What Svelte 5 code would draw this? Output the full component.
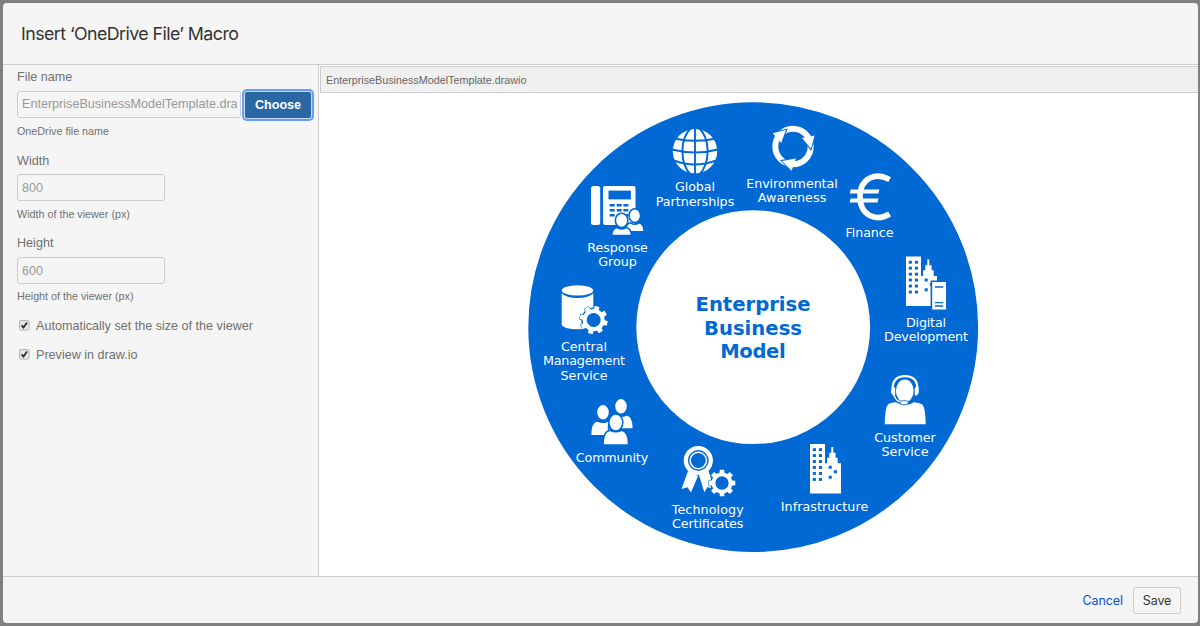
<script>
  const blue = '#0069d4';

  const labels = [
    { x: 695, y: 191.2, lines: [['Global', 40], ['Partnerships', 78.5]] },
    { x: 792, y: 187.6, lines: [['Environmental', 91.5], ['Awareness', 68.5]] },
    { x: 869.5, y: 237, lines: [['Finance', 48]] },
    { x: 926, y: 327, lines: [['Digital', 40], ['Development', 84]] },
    { x: 905, y: 441.8, lines: [['Customer', 61.5], ['Service', 47]] },
    { x: 824.5, y: 511, lines: [['Infrastructure', 87.5]] },
    { x: 707.7, y: 513.8, lines: [['Technology', 72], ['Certificates', 71.5]] },
    { x: 612, y: 462, lines: [['Community', 72.5]] },
    { x: 584, y: 351, lines: [['Central', 46], ['Management', 82], ['Service', 47]] },
    { x: 617.5, y: 251.8, lines: [['Response', 60.5], ['Group', 38.5]] }
  ];

  const title = [['Enterprise', 115, 311], ['Business', 98, 334.7], ['Model', 65.5, 358.4]];

  const gears = [
    { x: 593.7, y: 320, s: 1, turn: 14 },
    { x: 722, y: 483, s: 0.95, turn: 0 }
  ];
  const teeth = [0, 45, 90, 135, 180, 225, 270, 315];
  const windowRows = [448.2, 454.1, 460.1, 466, 472, 478];
</script>

{#snippet person(x, y, rx, ry, half, top, bottom)}
  <path
    d="M{x - half} {bottom}Q{x - half} {top + 1} {x - half * 0.45} {top}Q{x} {top + 3} {x + half * 0.45} {top}Q{x + half} {top + 1} {x + half} {bottom}Z"
    class="cut"
  />
  <ellipse cx={x} cy={y} {rx} {ry} class="cut" />
{/snippet}

{#snippet building()}
  <path d="M810 444H825V463.3H827V457.7H829.3V452.7H831.3V447H833.3V452.7H835.6V457.7H837.7V463.3H841V493.5H810Z" fill="#fff" />
  {#each windowRows as y}
    <rect x="812.8" {y} width="3.1" height="2.9" fill={blue} />
    <rect x="818.9" {y} width="3.1" height="2.9" fill={blue} />
  {/each}
  <path d="M828.7 465.8h3v3h-3zM833.9 470.3h3v3h-3zM828.7 475.7h3v3h-3z" fill={blue} />
{/snippet}

<div class="backdrop">
  <section class="dialog">
    <header><h1>Insert ‘OneDrive File’ Macro</h1></header>
    <main>
      <form class="side">
        <label class="name" for="file">File name</label>
        <div class="file-row">
          <div class="field wide" id="file"><span>EnterpriseBusinessModelTemplate.drawio</span></div>
          <button type="button" class="choose">Choose</button>
        </div>
        <p>OneDrive file name</p>
        <div class="name lower">Width</div>
        <div class="field">800</div>
        <p>Width of the viewer (px)</p>
        <div class="name">Height</div>
        <div class="field">600</div>
        <p class="last">Height of the viewer (px)</p>
        {#each ['Automatically set the size of the viewer', 'Preview in draw.io'] as option}
          <div class="check">
            <svg width="11" height="11" viewBox="0 0 11 11">
              <rect x=".5" y=".5" width="9.6" height="9.6" rx="1.5" fill="#e6e6e6" stroke="#b4b4b4" />
              <path d="M2.6 5.4L4.5 7.5L8 2.6" fill="none" stroke="#2d2d2d" stroke-width="1.8" />
            </svg>
            <span>{option}</span>
          </div>
        {/each}
      </form>
      <div class="preview">
        <div class="bar">EnterpriseBusinessModelTemplate.drawio</div>
        <svg class="diagram" viewBox="319 93 879 483">
          <circle cx="753.2" cy="327.2" r="170.9" fill="none" stroke={blue} stroke-width="108" />

          <!-- globe -->
          <circle cx="695" cy="151.3" r="22.2" fill="#fff" />
          <g fill="none" stroke={blue} stroke-width="1.9">
            <path d="M695 128V175M691 128C679.5 139 679.5 163 691 175M699 128C710.5 139 710.5 163 699 175M674 138.5Q695 143 716 138.5M672 149.5Q695 155.5 718 149.5M674 160.5Q695 168.5 716 160.5" />
          </g>

          <!-- cycle arrows -->
          <circle cx="793" cy="146.5" r="17.7" fill="none" stroke="#fff" stroke-width="6" />
          {#each [0, 120, 240] as turn}
            <g transform="rotate({turn} 793 146.5)">
              <path d="M801.8 138.8L811.2 151L815.5 136.5Z" fill={blue} />
              <path d="M802 138L811 148.8L814.6 135.6Z" fill="#fff" />
            </g>
          {/each}

          <!-- euro -->
          <path d="M889.6 179.6C875.5 171.8 860 178 860 196.6C860 215.5 876 222.2 889.6 214" fill="none" stroke="#fff" stroke-width="5.6" />
          <path d="M850.7 189.6H879.4L878.4 193.6H849.7ZM850.7 198.6H878.5L877.5 202.6H849.7Z" fill="#fff" />

          <!-- desk phone -->
          <rect x="591" y="186" width="9.2" height="39" rx="2.5" fill="#fff" />
          <rect x="603" y="186" width="32.5" height="39" rx="2" fill="#fff" />
          <rect x="608.5" y="190.6" width="22.4" height="8.8" fill={blue} />
          {#each [204, 209, 214] as y}
            <path d="M609.7 {y}h5v2.5h-5zM616.7 {y}h5v2.5h-5zM623.4 {y}h5v2.5h-5z" fill={blue} />
          {/each}
          {@render person(634.8, 215.7, 5.8, 6.9, 9.3, 222.8, 231.7)}
          {@render person(621.6, 220.4, 6.2, 7.2, 9.8, 227.5, 235.6)}

          <!-- database -->
          <ellipse cx="577.5" cy="290.4" rx="15.7" ry="5.2" fill="#fff" />
          <path d="M561.7 293.2Q566 298 577.5 298T593.3 293.2V325Q590 329.3 577.5 329.3T561.7 325Z" fill="#fff" />

          <!-- community -->
          {@render person(603, 412.3, 6.6, 8, 12.5, 420.8, 435.8)}
          {@render person(621, 406.3, 6.6, 8, 12.5, 414.8, 429)}
          {@render person(615.8, 422.5, 7, 8.5, 12.8, 430.3, 445)}

          <!-- award ribbon -->
          <path d="M688 471L698 476L691 492.5L687.5 487.3L681.5 489ZM708.5 471L699 475L704.3 492.3L707.5 487L714.5 489Z" fill="#fff" />
          <circle cx="698.3" cy="460.5" r="14.6" fill="#fff" />
          <circle cx="698.3" cy="460.5" r="10.4" fill={blue} />
          <circle cx="698.3" cy="460.5" r="8.2" fill={blue} stroke="#fff" stroke-width="1.5" />

          {#each gears as g}
            <g transform="translate({g.x} {g.y}) scale({g.s}) rotate({g.turn})">
              <circle r="12.5" fill={blue} />
              {#each teeth as a}
                <path d="M-2.8 -9L-2.3 -14H2.3L2.8 -9Z" transform="rotate({a})" class="tooth" />
              {/each}
              <circle r="9" fill="none" stroke="#fff" stroke-width="4" />
            </g>
          {/each}

          {@render building()}
          <g transform="translate(96 -187.4)">{@render building()}</g>
          <path d="M931.4 281.2H946.8V310.4H931.4Z" class="cut" />
          <path d="M935 287h8.2M935 302.6h8.2M935 306h8.2" stroke={blue} stroke-width="1.4" />

          <!-- headset agent -->
          <path d="M884.7 424.3Q885 407.5 888 404.5Q890.5 402.4 896 402.2Q905 408 914 402.2Q919.5 402.4 922.3 404.5Q925.4 407.5 925.7 424.3Z" fill="#fff" />
          <ellipse cx="904.8" cy="390.8" rx="9.7" ry="12.2" class="cut" />
          <path d="M892.6 389C892.6 380 897.5 376.1 905 376.1S917.4 380 917.4 389" fill="none" stroke="#fff" stroke-width="2.2" />
          <path d="M891.6 387.5h3.6v8h-1.2q-2.9-.8-2.9-4zM914.8 387.5h3.6l.4 4q0 3.200-2.700 4h-1.300z" fill="#fff" />
          <path d="M893.8 395Q896 401.8 903 402.8" fill="none" stroke="#fff" stroke-width="1.4" />
          <rect x="900.2" y="400.7" width="8" height="4" rx="2" fill="#fff" stroke={blue} stroke-width=".8" />

          <g class="caption">
            {#each labels as l}
              {#each l.lines as [text, width], i}
                <text x={l.x} y={l.y + i * 14.4} textLength={width}>{text}</text>
              {/each}
            {/each}
          </g>
          <g class="headline">
            {#each title as [text, width, y]}
              <text x="753" {y} textLength={width}>{text}</text>
            {/each}
          </g>
        </svg>
      </div>
    </main>
    <footer>
      <span class="cancel">Cancel</span>
      <button type="button" class="save">Save</button>
    </footer>
  </section>
</div>

<style>
  :global(body) { margin: 0; background: #808080; }
  * { box-sizing: border-box; }
  .backdrop {
    width: 1200px; height: 626px; padding: 3px 2px 3px 3px;
    background: #808080; overflow: hidden;
    font-family: "Liberation Sans", Arial, sans-serif;
  }
  .dialog {
    height: 620px; display: flex; flex-direction: column;
    background: #f5f5f5; border-radius: 4px; overflow: hidden;
  }
  header { height: 62px; flex: none; border-bottom: 1px solid #ccc; padding: 0 18px; display: flex; align-items: center; }
  h1 { margin: 0; font: 400 17.8px/24px Inter, sans-serif; letter-spacing: -0.56px; color: #333; }
  main { flex: 1; min-height: 0; display: flex; }
  .side { width: 316px; flex: none; border-right: 1px solid #ccc; padding: 3px 4px 0 14px; color: #707070; }
  .name { display: block; font-size: 12.6px; line-height: 18px; height: 23px; }
  .lower { padding-top: 1px; }
  .file-row { display: flex; align-items: flex-start; gap: 4px; }
  .field {
    width: 148px; height: 27px; border: 1px solid #ccc; border-radius: 3px; padding: 0 4px;
    font-size: 12.6px; line-height: 26px; color: #999; white-space: nowrap;
  }
  .wide { width: 224px; flex: none; line-height: 25px; }
  .wide span { display: block; width: 215px; overflow: hidden; }
  .choose {
    width: 66px; height: 26px; padding: 0; border: 0; border-radius: 2px; margin-top: 1px;
    background: #2a67a5; color: #fff; font: 700 12.6px/25px "Liberation Sans", Arial, sans-serif;
    box-shadow: 0 0 0 1px #c8dafa, 0 0 0 3px #669df6;
  }
  p { margin: 0; font-size: 10.75px; line-height: 15px; height: 33px; padding-top: 6px; }
  .last { height: 27px; padding-top: 5px; }
  .check { display: flex; align-items: center; height: 29px; gap: 6px; padding-left: 2px; font-size: 12.6px; }
  .check svg { flex: none; }
  .preview { flex: 1; min-width: 0; background: #fff; display: flex; flex-direction: column; }
  .bar {
    height: 27px; margin: 1px 0 0 1px; flex: none; background: #f0f0f0; border: 1px solid #ccc; border-right: 0;
    padding-left: 5px; font-size: 10.78px; line-height: 27px; color: #666;
  }
  .diagram { display: block; width: 879px; height: 483px; flex: none; }
  .cut { fill: #fff; stroke: #0069d4; stroke-width: 1.6; }
  .tooth { fill: #fff; stroke: #0069d4; stroke-width: 1; paint-order: stroke; }
  text { text-anchor: middle; }
  .caption { font: 12.7px "DejaVu Sans", Verdana, sans-serif; fill: #fff; }
  .headline { font: 700 19.6px "DejaVu Sans", Verdana, sans-serif; fill: #0069d4; }
  footer {
    height: 47px; flex: none; border-top: 1px solid #ccc; padding-right: 17px;
    display: flex; align-items: center; justify-content: flex-end; gap: 10px;
    font: 12.5px Inter, sans-serif;
  }
  .cancel { color: #0052cc; letter-spacing: -0.1px; }
  .save {
    width: 48px; height: 27px; padding: 0; border: 1px solid #ccc; border-radius: 3px;
    background: #f5f5f5; color: #333; font: 12.5px Inter, sans-serif; letter-spacing: -0.1px;
  }
</style>
